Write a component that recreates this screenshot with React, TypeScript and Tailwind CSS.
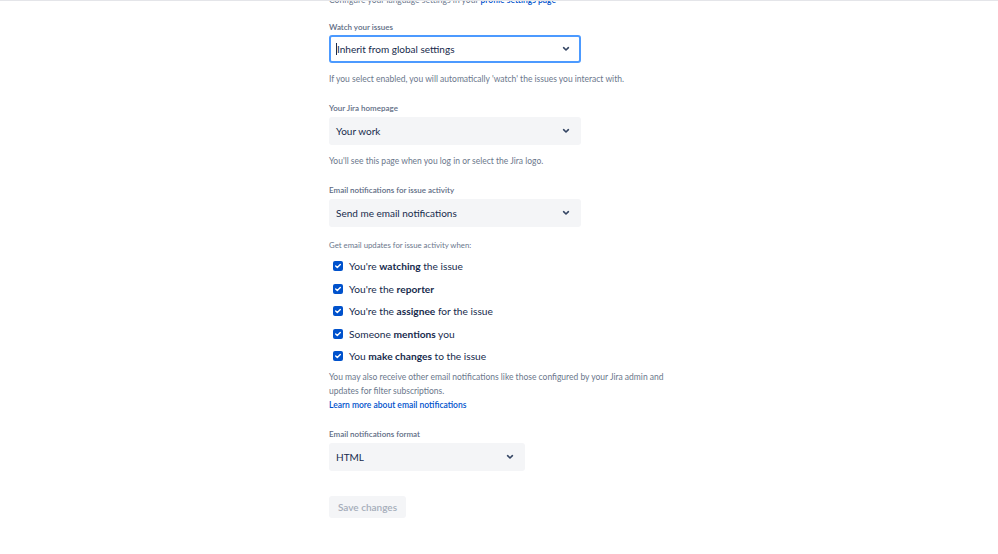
import React from "react";

const font = { fontFamily: 'Lato, "Noto Sans", sans-serif' };

function Chevron() {
  return (
    <svg width="8" height="6" viewBox="0 0 8 6" className="shrink-0">
      <path d="M1.6 1.7 L4 4 L6.4 1.7" stroke="#344563" strokeWidth="1.6" fill="none" strokeLinecap="round" strokeLinejoin="round" />
    </svg>
  );
}

function Select({ value, width, focused }: { value: string; width: string; focused?: boolean }) {
  return (
    <div
      className={`${width} h-[28px] rounded-[3px] flex items-center justify-between pl-[5px] pr-[9px] ${
        focused ? "bg-white border-2 border-[#4c9aff]" : "bg-[#f4f5f7] border-2 border-[#f4f5f7]"
      }`}
    >
      <span className="text-[10px] text-[#172b4d] leading-[14px] flex items-center">
        {focused && <span className="inline-block w-[1px] h-[12px] bg-[#172b4d]" />}
        {value}
      </span>
      <Chevron />
    </div>
  );
}

function Label({ children, className = "" }: { children: React.ReactNode; className?: string }) {
  return <div className={`text-[8px] leading-[14px] font-semibold text-[#5e6c84] ${className}`}>{children}</div>;
}

function Help({ children, className = "" }: { children: React.ReactNode; className?: string }) {
  return <div className={`leading-[12px] text-[#6b778c] ${className}`}>{children}</div>;
}

function Check({ children }: { children: React.ReactNode }) {
  return (
    <div className="h-[22.5px] flex items-center">
      <div className="ml-[4px] w-[10px] h-[10px] rounded-[2px] bg-[#0052cc] flex items-center justify-center">
        <svg width="8" height="8" viewBox="0 0 8 8">
          <path d="M1.7 4.1 L3.3 5.6 L6.3 2.5" stroke="white" strokeWidth="1.4" fill="none" strokeLinecap="round" strokeLinejoin="round" />
        </svg>
      </div>
      <span className="ml-[6px] text-[10.2px] leading-[14px] text-[#172b4d]">{children}</span>
    </div>
  );
}

export default function App() {
  return (
    <div className="w-[998px] h-[554px] bg-white border-t border-[#e4e5e9] overflow-hidden" style={font}>
      <div className="ml-[329px] w-[380px]">
        <div className="-mt-[7px] text-[8.5px] leading-[12px] text-[#6b778c]">
          Configure your language settings in your{" "}
          <span className="text-[#0052cc] font-semibold">profile settings page</span>
        </div>

        <Label className="mt-[14px]">Watch your issues</Label>
        <div className="mt-[1px]">
          <Select value="Inherit from global settings" width="w-[252px]" focused />
        </div>
        <Help className="mt-[10px] text-[8.5px]">If you select enabled, you will automatically 'watch' the issues you interact with.</Help>

        <Label className="mt-[16px]">Your Jira homepage</Label>
        <div className="mt-[2px]">
          <Select value="Your work" width="w-[252px]" />
        </div>
        <Help className="mt-[10px] text-[8.5px]">You'll see this page when you log in or select the Jira logo.</Help>

        <Label className="mt-[16px]">Email notifications for issue activity</Label>
        <div className="mt-[2px]">
          <Select value="Send me email notifications" width="w-[252px]" />
        </div>
        <Help className="mt-[12px] text-[7.8px]">Get email updates for issue activity when:</Help>

        <div className="mt-[4px] flex flex-col">
          <Check>
            You're <b>watching</b> the issue
          </Check>
          <Check>
            You're the <b>reporter</b>
          </Check>
          <Check>
            You're the <b>assignee</b> for the issue
          </Check>
          <Check>
            Someone <b>mentions</b> you
          </Check>
          <Check>
            You <b>make changes</b> to the issue
          </Check>
        </div>

        <div className="mt-[2.5px] text-[8.5px] leading-[14px] text-[#6b778c] w-[345px]">
          You may also receive other email notifications like those configured by your Jira admin and updates for filter subscriptions.
        </div>
        <div className="text-[8.5px] leading-[14px] text-[#0052cc] font-semibold">Learn more about email notifications</div>

        <Label className="mt-[15px]">Email notifications format</Label>
        <div className="mt-[2px]">
          <Select value="HTML" width="w-[196px]" />
        </div>

        <div className="mt-[25px] w-[77px] h-[22px] rounded-[3px] bg-[#f4f5f7] flex items-center justify-center text-[10px] font-semibold text-[#a5adba]">
          Save changes
        </div>
      </div>
    </div>
  );
}
